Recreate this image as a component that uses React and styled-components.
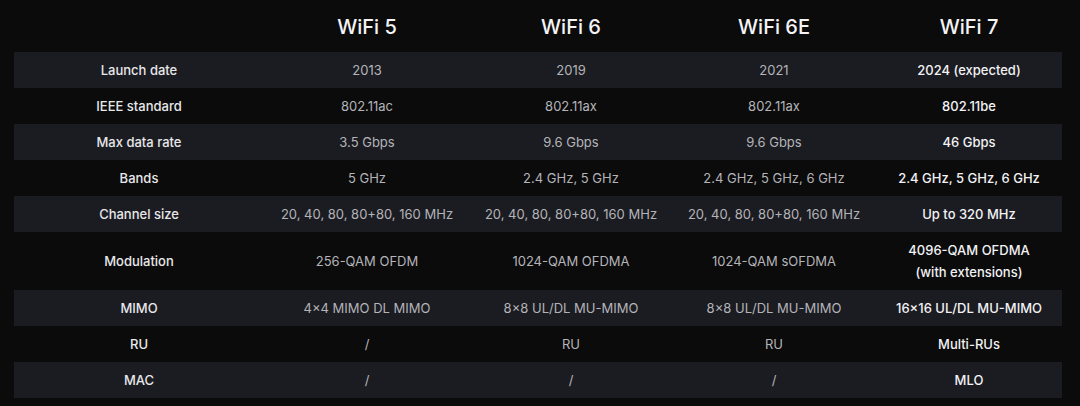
import React from 'react';
import styled, { createGlobalStyle } from 'styled-components';

const GlobalStyle = createGlobalStyle`
  html, body {
    margin: 0;
    padding: 0;
    background: #0b0b0c;
  }
  body {
    font-family: Inter, "Noto Sans", "Liberation Sans", sans-serif;
  }
`;

const columns = ['WiFi 5', 'WiFi 6', 'WiFi 6E', 'WiFi 7'];

const rows = [
  { label: 'Launch date', values: ['2013', '2019', '2021', '2024 (expected)'] },
  { label: 'IEEE standard', values: ['802.11ac', '802.11ax', '802.11ax', '802.11be'] },
  { label: 'Max data rate', values: ['3.5 Gbps', '9.6 Gbps', '9.6 Gbps', '46 Gbps'] },
  { label: 'Bands', values: ['5 GHz', '2.4 GHz, 5 GHz', '2.4 GHz, 5 GHz, 6 GHz', '2.4 GHz, 5 GHz, 6 GHz'] },
  {
    label: 'Channel size',
    values: ['20, 40, 80, 80+80, 160 MHz', '20, 40, 80, 80+80, 160 MHz', '20, 40, 80, 80+80, 160 MHz', 'Up to 320 MHz'],
  },
  {
    label: 'Modulation',
    tall: true,
    values: ['256-QAM OFDM', '1024-QAM OFDMA', '1024-QAM sOFDMA', ['4096-QAM OFDMA', '(with extensions)']],
  },
  { label: 'MIMO', values: ['4×4 MIMO DL MIMO', '8×8 UL/DL MU-MIMO', '8×8 UL/DL MU-MIMO', '16×16 UL/DL MU-MIMO'] },
  { label: 'RU', values: ['/', 'RU', 'RU', 'Multi-RUs'] },
  { label: 'MAC', values: ['/', '/', '/', 'MLO'] },
];

const App = () => {
  return (
    <Page>
      <GlobalStyle />
      <Table>
        <HeaderRow>
          <HeadCell />
          {columns.map((c) => (
            <HeadCell key={c}>{c}</HeadCell>
          ))}
        </HeaderRow>
        {rows.map((row, i) => (
          <Row key={row.label} striped={i % 2 === 0} tall={row.tall}>
            <LabelCell>{row.label}</LabelCell>
            {row.values.map((v, j) => (
              <Cell key={j} highlight={j === 3}>
                {Array.isArray(v) ? v.map((line) => <Line key={line}>{line}</Line>) : v}
              </Cell>
            ))}
          </Row>
        ))}
      </Table>
    </Page>
  );
};

export default App;

const Page = styled.div`
  width: 1080px;
  height: 406px;
  background: #0b0b0c;
  padding: 0 18px 0 14px;
  box-sizing: border-box;
`;

const Table = styled.div`
  width: 1048px;
  display: flex;
  flex-direction: column;
`;

const grid = `
  display: grid;
  grid-template-columns: 250px 206px 202px 204px 186px;
`;

const HeaderRow = styled.div`
  ${grid}
  height: 52px;
  align-items: center;
`;

const HeadCell = styled.div`
  text-align: center;
  color: #f4f4f6;
  font-size: 20px;
  font-weight: 500;
  padding-top: 1px;
`;

const Row = styled.div`
  ${grid}
  height: ${(p) => (p.tall ? '58px' : '36px')};
  align-items: center;
  background: ${(p) => (p.striped ? '#1b1c22' : 'transparent')};
`;

const LabelCell = styled.div`
  text-align: center;
  color: #e8e8ea;
  font-size: 13px;
  font-weight: 500;
`;

const Cell = styled.div`
  text-align: center;
  font-size: 13px;
  line-height: 22px;
  color: ${(p) => (p.highlight ? '#f2f2f4' : '#b4b4b8')};
  font-weight: ${(p) => (p.highlight ? 500 : 400)};
`;

const Line = styled.div``;
